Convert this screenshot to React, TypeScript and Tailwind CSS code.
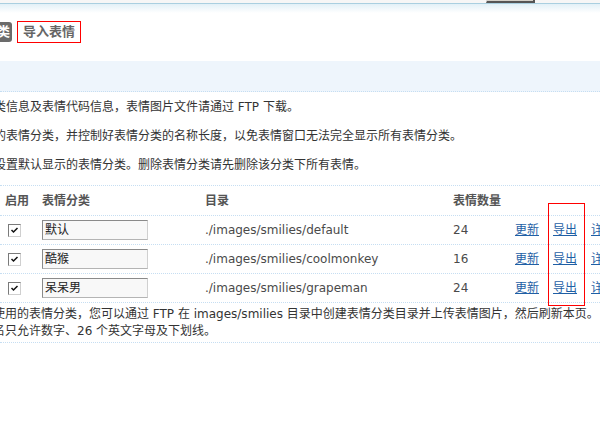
import { type ReactElement } from 'react';

// ── Data ─────────────────────────────────────────────────────────────────

interface SmileyType {
  name: string;
  dir: string;
  count: number;
}

const SMILEY_TYPES: SmileyType[] = [
  { name: '默认', dir: './images/smilies/default', count: 24 },
  { name: '酷猴', dir: './images/smilies/coolmonkey', count: 16 },
  { name: '呆呆男', dir: './images/smilies/grapeman', count: 24 },
];

const TIPS = [
  '类信息及表情代码信息，表情图片文件请通过 FTP 下载。',
  '的表情分类，并控制好表情分类的名称长度，以免表情窗口无法完全显示所有表情分类。',
  '设置默认显示的表情分类。删除表情分类请先删除该分类下所有表情。',
];

const FONT = "font-['DejaVu_Sans','Noto_Sans_CJK_SC',sans-serif]";
const COLS = 'grid grid-cols-[42px_163px_248px_62px_38px_38px_1fr]';
const DOTTED = 'border-b border-dotted border-[#c6def2]';

// ══════════════════════════════════════════════════════════════════════════
// Page
// ══════════════════════════════════════════════════════════════════════════

export default function App(): ReactElement {
  return (
    <div
      className={`relative h-[437px] w-[600px] overflow-hidden bg-white text-[12px] text-[#333] ${FONT}`}
    >
      {/* Top bar */}
      <div className="h-[3px] bg-[#f6f6f6]">
        <div className="ml-[486px] h-[3px] w-[49px] border-b-2 border-r-2 border-l border-b-[#555] border-r-[#555] border-l-[#ddd] bg-[#d4d0c8]" />
      </div>
      <div className="h-px bg-[#a9cfe0]" />
      <div className="h-[9px] bg-gradient-to-b from-[#e2f0f7] to-white" />

      {/* Tabs */}
      <div className="mt-[8px] flex h-[22px] items-center">
        <span className="-ml-[60px] flex h-[20px] w-[72px] items-center justify-end rounded-[3px] bg-[#6b6b6b] pr-[2px] text-[13px] font-bold text-white">
          表情分类
        </span>
        <span className="ml-[5px] flex h-[22px] items-center border border-[#f00] px-[5px] text-[13px] font-bold text-[#666]">
          导入表情
        </span>
      </div>

      {/* Blue band */}
      <div className={`mt-[18px] h-[31px] bg-[#eef5fc] ${DOTTED}`} />

      {/* Tips */}
      <ul className={`flex flex-col gap-[13px] pt-[7px] pb-[12px] ${DOTTED}`}>
        {TIPS.map((tip) => (
          <li key={tip} className="-ml-[6px] whitespace-nowrap leading-[16px]">
            {tip}
          </li>
        ))}
      </ul>

      {/* Table header */}
      <div className={`${COLS} h-[30px] items-center pt-px font-bold text-[#555] ${DOTTED}`}>
        <span className="pl-[5px]">启用</span>
        <span>表情分类</span>
        <span>目录</span>
        <span>表情数量</span>
        <span />
        <span />
        <span />
      </div>

      {/* Rows */}
      {SMILEY_TYPES.map((t) => (
        <div key={t.dir} className={`${COLS} h-[29px] items-center ${DOTTED}`}>
          <span className="pl-[8px]">
            <Checkbox />
          </span>
          <span>
            <span className="flex h-[20px] w-[106px] items-center border border-[#8a8a8a] border-b-[#b4b4b4] border-r-[#d0d0d0] bg-[#f8f8f8] pl-[2px] text-[#222]">
              {t.name}
            </span>
          </span>
          <span className="whitespace-nowrap text-[#4a4a4a]">{t.dir}</span>
          <span className="text-[#4a4a4a]">{t.count}</span>
          <a className="text-[#1f5fa5] underline">更新</a>
          <a className="text-[#1f5fa5] underline">导出</a>
          <a className="whitespace-nowrap text-[#1f5fa5] underline">详情</a>
        </div>
      ))}

      {/* Footer note */}
      <div className={`pt-[3px] pb-[2px] leading-[17px] ${DOTTED}`}>
        <p className="-ml-[7px] whitespace-nowrap">
          使用的表情分类，您可以通过 FTP 在 images/smilies 目录中创建表情分类目录并上传表情图片，然后刷新本页。
        </p>
        <p className="-ml-[7px] whitespace-nowrap">名只允许数字、26 个英文字母及下划线。</p>
      </div>

      {/* Annotation box around the export column */}
      <div className="pointer-events-none absolute left-[548px] top-[203px] h-[103px] w-[37px] border border-[#f00]" />
    </div>
  );
}

// ── Checkbox ─────────────────────────────────────────────────────────────

function Checkbox(): ReactElement {
  return (
    <span className="flex h-[13px] w-[13px] items-center justify-center border border-[#7a7a7a] border-b-[#cfcfcf] border-r-[#cfcfcf] bg-white">
      <svg width="9" height="9" viewBox="0 0 9 9">
        <path d="M1.5 4 L3.5 6 L7.5 2" fill="none" stroke="#111" strokeWidth="1.5" />
      </svg>
    </span>
  );
}
